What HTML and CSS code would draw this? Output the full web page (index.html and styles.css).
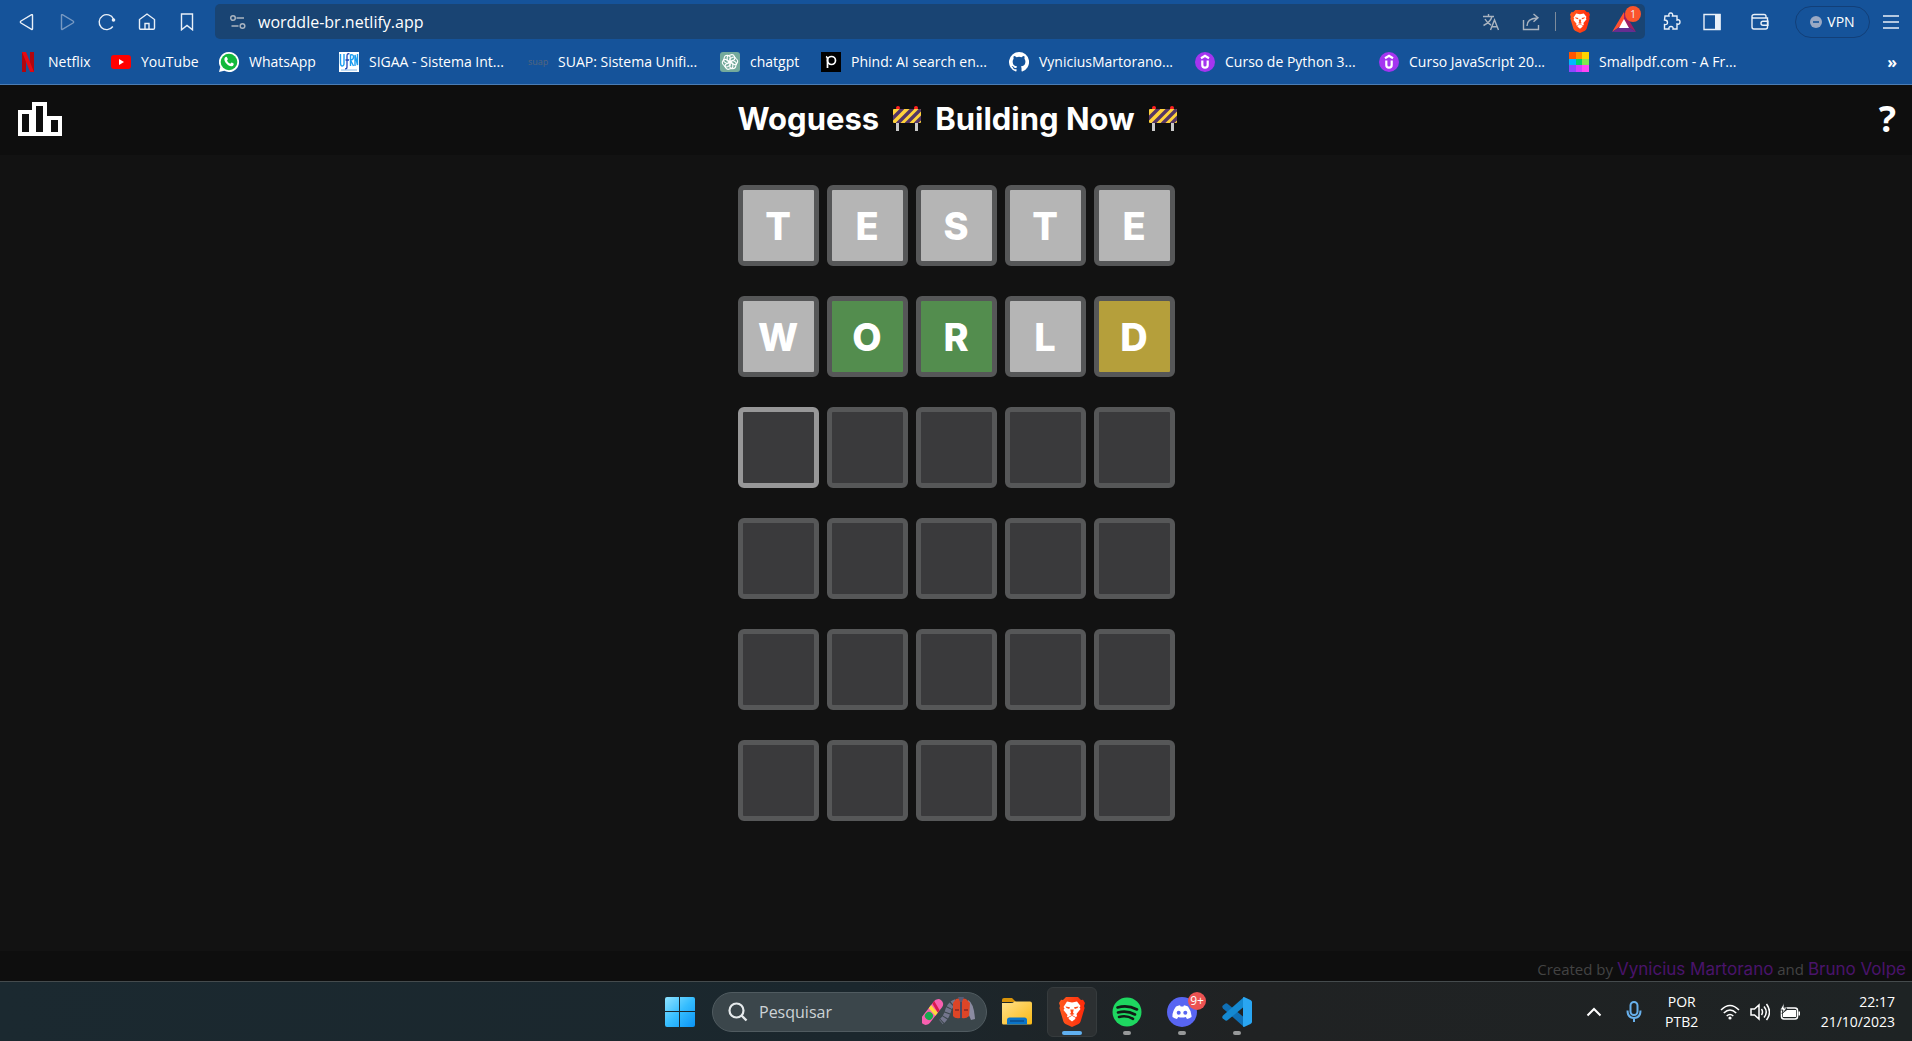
FILE: index.html
```html
<!DOCTYPE html>
<html lang="pt-BR">
<head>
<meta charset="utf-8">
<title>Woguess</title>
<link rel="stylesheet" href="styles.css">
</head>
<body>
<svg class="defs" aria-hidden="true">
  <defs>
    <linearGradient id="braveFill" x1="0" x2="1"><stop offset="0" stop-color="#ff5a1f"/><stop offset="1" stop-color="#ff2a0a"/></linearGradient>
    <linearGradient id="winFill" x1="0" y1="0" x2="1" y2="1"><stop offset="0" stop-color="#8fe3ff"/><stop offset=".5" stop-color="#35bdff"/><stop offset="1" stop-color="#0a93f5"/></linearGradient>
    <linearGradient id="folderFill" x1="0" y1="0" x2="1" y2="1"><stop offset="0" stop-color="#ffe08a"/><stop offset="1" stop-color="#f9b915"/></linearGradient>
    <clipPath id="boardClip"><rect x="0" y="3" width="28" height="14" rx="1"/></clipPath>
    <symbol id="brave" viewBox="0 0 26 30">
      <path d="M7 0h12l3 3 2-.3L26 6l-1 3 .6 2-4 13.500Q21 26 19.500 27L13 30l-6.500-3Q5 26 4.400 24.500L.4 11 1 9 0 6l2-3.300L4 3z" fill="url(#braveFill)"/>
      <path d="M8 4.500l5 1 5-1 3.500 4.500-1 1.500 1 1.500-4 5 .5 2-1 1.200-4-2.200-4 2.200L8 20l.5-2-4-5 1-1.500-1-1.500z" fill="#fff"/>
      <path d="M9.500 20.700l3.500-2 3.500 2-.3 1.300-3.200 2.500L9.800 22z" fill="#fff"/>
      <path d="M6.500 9.500l4.500.8-.8 1.800L7.500 11zM19.500 9.500l-4.500.8.8 1.800 2.700-1.100zM11.300 12.500h3.400L14 16l1.500 1-2.500 1-2.500-1 1.500-1z" fill="#ff4a18"/>
    </symbol>
    <symbol id="barrier" viewBox="0 0 28 26">
      <path d="M3 16h3v9H3zM22 16h3v9h-3z" fill="#c9c9c9"/>
      <circle cx="5" cy="2" r="2" fill="#f22"/><circle cx="23" cy="2" r="2" fill="#f22"/>
      <g clip-path="url(#boardClip)"><path d="M0 3h28v14H0z" fill="#ffd23b"/><path d="M-3 15L10 2M4 18L20 2M13 18L29 2M22 18l9-9" stroke="#533566" stroke-width="3.400"/></g>
    </symbol>
    <symbol id="udemy" viewBox="0 0 20 20"><circle cx="10" cy="10" r="10" fill="#a435f0"/><path d="M6 6.200l4-2.400 4 2.400M7.300 8.500v4.500q0 2.700 2.700 2.700t2.700-2.700V8.500" fill="none" stroke="#fff" stroke-width="2.200"/></symbol>
  </defs>
</svg>

<header class="browser">
  <div class="toolbar">
    <nav class="nav-buttons" aria-label="Navegação">
      <button class="tool" aria-label="Voltar"><svg width="18" height="18" viewBox="0 0 18 18"><path d="M14.500 2.200v13.600q0 1-.9.500L3 10q-1.300-1 0-2l10.600-6.300q.9-.4.9.5z"/></svg></button>
      <button class="tool dim" aria-label="Avançar"><svg width="18" height="18" viewBox="0 0 18 18"><path d="M3.500 2.200v13.600q0 1 .9.500L15 10q1.300-1 0-2L4.400 1.700q-.9-.4-.9.500z"/></svg></button>
      <button class="tool" aria-label="Recarregar"><svg width="18" height="18" viewBox="0 0 18 18"><path d="M14.800 13.500A7.500 7.500 0 1 1 15.500 6"/><circle cx="15.500" cy="7" r="1.800" fill="currentColor" stroke="none"/></svg></button>
      <button class="tool" aria-label="Início"><svg width="18" height="18" viewBox="0 0 18 18"><path d="M1.500 6.500L9 1l7.500 5.500V15q0 1.300-1.300 1.300H2.800Q1.500 16.300 1.500 15zM7 16V10.500h4V16"/></svg></button>
      <button class="tool" aria-label="Favorito"><svg width="18" height="18" viewBox="0 0 18 18"><path d="M3.500 1h11v15.800L9 12.500l-5.500 4.300z"/></svg></button>
    </nav>
    <div class="address">
      <svg class="tune" width="16" height="16" viewBox="0 0 16 16"><circle cx="3" cy="4" r="2.300"/><path d="M6.500 4H14M1.500 12h7"/><circle cx="12.500" cy="12" r="2.300"/></svg>
      <input class="url" aria-label="Endereço" value="worddle-br.netlify.app">
      <button class="tool muted" aria-label="Traduzir"><svg width="18" height="18" viewBox="0 0 18 18"><path d="M1 3.500h11M6.500 1v2.500M10 3.500Q8.500 9 1.500 12.500M3 6q2 4 6 6M8.500 17l4-10 4 10M10 13.800h5"/></svg></button>
      <button class="tool muted" aria-label="Compartilhar"><svg width="18" height="18" viewBox="0 0 18 18"><path d="M1.500 7v9.500h15V12M5 13q0-7.500 10-8M11.500 1L16 4.800l-4.500 4"/></svg></button>
      <span class="separator"></span>
      <button class="tool" aria-label="Brave Shields"><svg class="solid" width="20" height="23"><use href="#brave"/></svg></button>
      <button class="tool rewards" aria-label="Brave Rewards"><svg class="solid" width="24" height="20" viewBox="0 0 24 20"><path d="M12 0L0 20l12-8z" fill="#ff5030"/><path d="M12 0l12 20-12-8z" fill="#9e1f63"/><path d="M0 20h24l-12-8z" fill="#662d91"/><path d="M12 7l5 9H7z" fill="#fff"/></svg><span class="badge">1</span></button>
    </div>
    <div class="actions">
      <button class="tool" aria-label="Extensões"><svg width="20" height="20" viewBox="0 0 20 20"><path d="M3 4h4q-.8-3 1.700-3T10.500 4H15v4q3-.8 3 2t-3 2v5h-4q.5-2.500-2-2.500T7 17H2.500v-4.500q3 .5 3-2T2.500 8z"/></svg></button>
      <button class="tool" aria-label="Barra lateral"><svg width="18" height="18" viewBox="0 0 18 18"><path d="M1 1.500h16v15H1z"/><path d="M12 1h5.500v16H12z" fill="currentColor" stroke="none"/></svg></button>
      <button class="tool wide" aria-label="Carteira"><svg width="18" height="18" viewBox="0 0 18 18"><path d="M15 5V3.500Q15 1.500 13 1.500H3.500Q1 1.500 1 3.500V14q0 2 2 2h11.500q2 0 2-2V5H3Q1 5 1 3.500M17 8.200h-5q-2 0-2 2t2 2h5z"/></svg></button>
      <button class="vpn"><svg width="12" height="12" viewBox="0 0 12 12"><circle cx="6" cy="6" r="6" fill="#9aa9c4"/><path d="M3 6h6" stroke="#15539a" stroke-width="1.600"/></svg>VPN</button>
      <button class="tool" aria-label="Menu"><svg width="18" height="18" viewBox="0 0 18 18"><path d="M1 3h16M1 9h16M1 15h16"/></svg></button>
    </div>
  </div>
  <nav class="bookmarks" aria-label="Favoritos">
    <a href="#"><svg viewBox="0 0 20 20"><path d="M4 0h4v20l-4 .5zM12 0h4v20.500l-4-.5z" fill="#b1060f"/><path d="M4 0h4l8 20-4-.3z" fill="#e50914"/></svg>Netflix</a>
    <a href="#"><svg viewBox="0 0 20 20"><rect y="3" width="20" height="14" rx="3" fill="#f00"/><path d="M8 7l5 3-5 3z" fill="#fff"/></svg>YouTube</a>
    <a href="#"><svg viewBox="0 0 20 20"><path d="M10 0a10 10 0 1 1-4.700 18.800L0 20l1.300-5A10 10 0 0 1 10 0z" fill="#fff"/><circle cx="10" cy="10" r="8.300" fill="#12b93c"/><path d="M6 5.500q1.500-1.500 2.200.2l.6 1.400q.2.600-.8 1.600 1.300 2.400 3.300 3l1-1q.3-.4 2.300.8.500 2.300-2 2.700Q9 14 6.500 10.500 4.500 7.500 6 5.500z" fill="#fff"/></svg>WhatsApp</a>
    <a href="#"><svg viewBox="0 0 20 20"><path d="M0 0h20v20H0z" fill="#fff"/><path d="M1.500 2v9q0 3 1.800 3T5 11V2M11.500 14V3q3-1 3 2t-3 3l3 6M16 14V3l2.500 10V2" fill="none" stroke="#1b9df0" stroke-width="1.400"/><path d="M10.500 2Q8 1 8 4v11q0 2-2 2M6.500 8H10" fill="none" stroke="#1c45b8" stroke-width="1.300"/><path d="M2 18h16" stroke="#82b8e8"/></svg>SIGAA - Sistema Int...</a>
    <a href="#"><span class="suap">suap</span>SUAP: Sistema Unifi...</a>
    <a href="#"><svg viewBox="0 0 20 20"><rect width="20" height="20" rx="3" fill="#74aa9c"/><g fill="none" stroke="#fff" stroke-width="1.100"><path id="petal" d="M10 3.200q3-1.500 4.500 1.200.6 1.600 0 3.200L10 10.200 7.200 8.600V5.400Q7.500 3 10 3.200z"/><use href="#petal" transform="rotate(60 10 10)"/><use href="#petal" transform="rotate(120 10 10)"/><use href="#petal" transform="rotate(180 10 10)"/><use href="#petal" transform="rotate(240 10 10)"/><use href="#petal" transform="rotate(300 10 10)"/></g></svg>chatgpt</a>
    <a href="#"><svg viewBox="0 0 20 20"><path d="M0 0h20v20H0z" fill="#000"/><path d="M5 4.500q1.500.5 1.500 2.500v9" fill="none" stroke="#fff" stroke-width="1.700"/><circle cx="10.500" cy="8.500" r="4" fill="none" stroke="#fff" stroke-width="1.700"/></svg>Phind: AI search en...</a>
    <a href="#"><svg viewBox="0 0 16 16"><path fill="#fff" d="M8 0a8 8 0 0 0-2.530 15.590c.4.070.55-.17.550-.38v-1.490c-2.010.37-2.530-.49-2.690-.94-.09-.23-.48-.94-.82-1.130-.28-.15-.68-.52-.01-.53.630-.01 1.080.58 1.230.82.720 1.210 1.870.87 2.330.66.070-.52.280-.87.510-1.070-1.780-.2-3.640-.89-3.640-3.950 0-.87.310-1.590.82-2.150-.08-.2-.36-1.020.08-2.120 0 0 .67-.21 2.200.82a7.500 7.500 0 0 1 4 0c1.530-1.040 2.200-.82 2.200-.82.440 1.100.16 1.920.08 2.120.51.560.82 1.270.82 2.150 0 3.070-1.870 3.750-3.650 3.950.29.250.54.730.54 1.480v2.200c0 .21.150.46.550.38A8 8 0 0 0 8 0z"/></svg>VyniciusMartorano...</a>
    <a href="#"><svg><use href="#udemy"/></svg>Curso de Python 3...</a>
    <a href="#"><svg><use href="#udemy"/></svg>Curso JavaScript 20...</a>
    <a href="#"><svg viewBox="0 0 20 20" shape-rendering="crispEdges"><path d="M0 0h7v7H0z" fill="#ff5500"/><path d="M7 0h6v7H7z" fill="#ff9000"/><path d="M13 0h7v7h-7z" fill="#ffd400"/><path d="M0 7h7v6H0z" fill="#00b8ff"/><path d="M7 7h6v6H7z" fill="#00d26a"/><path d="M13 7h7v6h-7z" fill="#82e650"/><path d="M0 13h7v7H0z" fill="#8f46ff"/><path d="M7 13h6v7H7z" fill="#d23cff"/><path d="M13 13h7v7h-7z" fill="#ff46f5"/></svg>Smallpdf.com - A Fr...</a>
    <button class="more" aria-label="Mais favoritos">»</button>
  </nav>
</header>

<div class="page">
  <header class="game-header">
    <button class="stats" aria-label="Estatísticas"><svg width="44" height="34" viewBox="0 0 44 34"><path d="M2 10h13v22H2zM16 2h11v30H16zM30 16h12v16H30z" fill="none" stroke="#fff" stroke-width="4"/><path d="M11 8h6v26h-6zM26 14h7v20h-7z" fill="#fff"/></svg></button>
    <h1>Woguess <svg width="28" height="26"><use href="#barrier"/></svg> Building Now <svg width="28" height="26"><use href="#barrier"/></svg></h1>
    <button class="help" aria-label="Ajuda">?</button>
  </header>
  <main class="board">
    <div class="row">
      <input class="cell miss" aria-label="Linha 1, letra 1" value="T"><input class="cell miss" aria-label="Linha 1, letra 2" value="E"><input class="cell miss" aria-label="Linha 1, letra 3" value="S"><input class="cell miss" aria-label="Linha 1, letra 4" value="T"><input class="cell miss" aria-label="Linha 1, letra 5" value="E">
    </div>
    <div class="row">
      <input class="cell miss" aria-label="Linha 2, letra 1" value="W"><input class="cell hit" aria-label="Linha 2, letra 2" value="O"><input class="cell hit" aria-label="Linha 2, letra 3" value="R"><input class="cell miss" aria-label="Linha 2, letra 4" value="L"><input class="cell near" aria-label="Linha 2, letra 5" value="D">
    </div>
    <div class="row">
      <input class="cell current" aria-label="Linha 3, letra 1"><input class="cell" aria-label="Linha 3, letra 2"><input class="cell" aria-label="Linha 3, letra 3"><input class="cell" aria-label="Linha 3, letra 4"><input class="cell" aria-label="Linha 3, letra 5">
    </div>
    <div class="row">
      <input class="cell" aria-label="Linha 4, letra 1"><input class="cell" aria-label="Linha 4, letra 2"><input class="cell" aria-label="Linha 4, letra 3"><input class="cell" aria-label="Linha 4, letra 4"><input class="cell" aria-label="Linha 4, letra 5">
    </div>
    <div class="row">
      <input class="cell" aria-label="Linha 5, letra 1"><input class="cell" aria-label="Linha 5, letra 2"><input class="cell" aria-label="Linha 5, letra 3"><input class="cell" aria-label="Linha 5, letra 4"><input class="cell" aria-label="Linha 5, letra 5">
    </div>
    <div class="row">
      <input class="cell" aria-label="Linha 6, letra 1"><input class="cell" aria-label="Linha 6, letra 2"><input class="cell" aria-label="Linha 6, letra 3"><input class="cell" aria-label="Linha 6, letra 4"><input class="cell" aria-label="Linha 6, letra 5">
    </div>
  </main>
  <footer class="credits"><p>Created by <a href="#">Vynicius Martorano</a> and <a href="#">Bruno Volpe</a></p></footer>
</div>

<footer class="taskbar">
  <div class="apps">
    <button class="app start" aria-label="Iniciar"><svg width="30" height="30" viewBox="0 0 30 30"><path d="M2 0h12v14H0V2q0-2 2-2zM15 0h13q2 0 2 2v12H15zM0 15h14v15H2q-2 0-2-2zM15 15h15v13q0 2-2 2H15z" fill="url(#winFill)"/></svg></button>
    <label class="search">
      <svg width="20" height="20" viewBox="0 0 20 20"><circle cx="8.500" cy="8.500" r="7" fill="none" stroke="#e6eaec" stroke-width="2.200"/><path d="M13.500 13.500l5 5" stroke="#e6eaec" stroke-width="2.400"/></svg>
      <input aria-label="Pesquisar" placeholder="Pesquisar">
      <svg width="54" height="30" viewBox="0 0 54 30">
        <g transform="rotate(38 10 15)"><rect x="5" y="0" width="10" height="30" rx="5" fill="#f860b0"/><path d="M5 5l10 4v3L5 8z" fill="#d81b4c"/><path d="M5 10l10 2v4l-10-2z" fill="#ffd93c"/><circle cx="10" cy="20" r="4" fill="#18a84e"/></g>
        <path d="M34 5Q28 7 26 14t-7 11" fill="none" stroke="#73758c" stroke-width="6" stroke-dasharray="4 1"/>
        <path d="M46 3q6 3 7 19l-4 1-5-12z" fill="#8b8ba1"/>
        <path d="M34 2l5-1 5 1 4 4-1 13q-3 3-7 2l-1-2-1 2q-5 1-7-2L31 6z" fill="#dc4527"/><path d="M36 0h6l-3 7z" fill="#575a76"/><path d="M39 5v16" stroke="#464963" stroke-width="2"/><path d="M33 13h4M42 13h4" stroke="#9f2e24" stroke-width="2"/>
      </svg>
    </label>
    <button class="app" aria-label="Explorador de Arquivos"><svg width="30" height="27" viewBox="0 0 30 27"><path d="M0 2q0-2 2-2h8l4 4H0z" fill="#d9940a"/><path d="M0 5h9q2 0 3.500-1.500H28q2 0 2 2V25q0 1.500-1.500 1.500h-27Q0 26.500 0 25z" fill="url(#folderFill)"/><path d="M5 26.500V22q0-2.500 2.500-2.500h15Q25 19.500 25 22v4.500z" fill="#0a74c8"/><path d="M8 23h14" stroke="#0b4d8c" stroke-width="1.500"/></svg></button>
    <button class="app active" aria-label="Brave"><svg width="26" height="30"><use href="#brave"/></svg></button>
    <button class="app running" aria-label="Spotify"><svg width="30" height="30" viewBox="0 0 30 30"><circle cx="15" cy="15" r="14.500" fill="#1ed760"/><path d="M5.500 10.500q10-3 19.500 2M6 15.500q9-2.500 17 2M7 20q7.500-2 14 1.800" fill="none" stroke="#111b16" stroke-width="2.600" stroke-linecap="round"/></svg></button>
    <button class="app running" aria-label="Discord"><svg width="30" height="30" viewBox="0 0 30 30"><circle cx="15" cy="15" r="15" fill="#5865f2"/><path d="M9 9.500q2-1 4-1.300l.7 1.200h2.600l.7-1.200q2 .3 4 1.300 4 5.500 3.500 10.500-2 1.500-4.500 2l-1.200-2q-3.800 1.200-7.600 0l-1.200 2q-2.500-.5-4.500-2Q5 15 9 9.500z" fill="#fff"/><circle cx="11.700" cy="15.700" r="2" fill="#5865f2"/><circle cx="18.300" cy="15.700" r="2" fill="#5865f2"/></svg><span class="count">9+</span></button>
    <button class="app running" aria-label="Visual Studio Code"><svg width="30" height="30" viewBox="0 0 30 30"><path d="M.8 8.500l2.700-2q1-.6 2 .2L24 22l-2 8L1 11.500q-1.400-1.600-.2-3z" fill="#0f6fb5"/><path d="M.8 21.500l2.700 2q1 .6 2-.2L24 8l-2-8L1 18.500q-1.400 1.600-.2 3z" fill="#1489d2"/><path d="M22 0l6.500 3Q30 4 30 5v20q0 1-1.500 2L22 30q-1 0-1-1V1q0-1 1-1z" fill="#2aa6f2"/></svg></button>
  </div>
  <div class="tray">
    <button aria-label="Ícones ocultos"><svg width="16" height="10" viewBox="0 0 16 10"><path d="M1.500 8.500L8 2l6.500 6.500" stroke-width="2"/></svg></button>
    <button class="mic" aria-label="Microfone"><svg width="16" height="22" viewBox="0 0 16 22"><rect x="4.500" y="1" width="7" height="13" rx="3.500"/><path d="M1.500 9.500q0 7.500 6.500 7.500t6.500-7.500M8 17v4"/></svg></button>
    <button class="lang">POR<br>PTB2</button>
    <button class="status" aria-label="Rede, som e bateria">
      <svg width="20" height="16" viewBox="0 0 20 16"><path d="M1 6q9-9 18 0M3.800 9q6.200-6 12.400 0M6.700 12q3.300-3 6.600 0"/><circle cx="10" cy="14" r="1.600" fill="#fff" stroke="none"/></svg>
      <svg width="20" height="18" viewBox="0 0 20 18"><path d="M1 6h3.500L9 2v14l-4.500-4H1zM11.500 6q2 3 0 6M14 3.500q4.500 5.500 0 11M16.500 1q6 8 0 16"/></svg>
      <svg width="20" height="18" viewBox="0 0 20 18"><rect x="1.500" y="5" width="16" height="11" rx="2.500"/><path d="M7 7h9v7H3v-4zM18.500 8.500h1.500v4h-1.500z" fill="#fff" stroke="none"/><path d="M4 0L0 7h3L2 11l5-6H4z" fill="#fff" stroke="#1e2426" stroke-width=".8"/></svg>
    </button>
    <button class="clock">22:17<br>21/10/2023</button>
  </div>
</footer>
</body>
</html>
```
FILE: styles.css
```css
* { box-sizing: border-box; }
html, body { height: 100%; }
body {
  margin: 0;
  display: flex;
  flex-direction: column;
  background: #121212;
  color: #fff;
  font: 14px/20px "Open Sans", "Noto Sans", sans-serif;
}
button, input { font: inherit; color: inherit; border: 0; padding: 0; background: none; outline: 0; }
button { display: flex; align-items: center; justify-content: center; flex: none; }
svg { flex: none; }
a { color: inherit; text-decoration: none; }
.defs { position: absolute; width: 0; height: 0; }

/* Browser bars */
.browser { background: #15539a; border-bottom: 1px solid #4b7db5; }
.toolbar { display: flex; align-items: center; height: 43px; padding-left: 7px; }
.nav-buttons, .actions { display: flex; align-items: center; }
.tool { position: relative; width: 40px; height: 34px; color: #e9f0f8; }
.tool svg:not(.solid) { fill: none; stroke: currentColor; stroke-width: 1.4; }
.tool.wide { width: 56px; }
.dim { color: #7799c2; }
.muted { color: #aab4c0; }
.address {
  flex: 1;
  display: flex;
  align-items: center;
  height: 35px;
  margin-left: 8px;
  padding: 0 1px 0 15px;
  border-radius: 5px;
  background: #194473;
}
.tune { fill: none; stroke: #aab4c0; stroke-width: 1.5; }
.url { flex: 1; min-width: 0; margin-left: 12px; font-size: 16px; }
.separator { width: 1px; height: 19px; margin: 0 4px; background: #7d8b9b; }
.rewards { margin-left: 4px; }
.badge {
  position: absolute;
  top: 1px;
  right: 3px;
  width: 16px;
  height: 16px;
  border-radius: 8px;
  background: #fb542b;
  font-size: 10px;
  line-height: 16px;
  text-align: center;
}
.actions { padding-left: 7px; }
.vpn { width: 75px; height: 32px; gap: 5px; margin-left: 7px; border: 1px solid #123f78; border-radius: 16px; }
.actions .vpn + .tool { width: 42px; }

.bookmarks {
  display: grid;
  grid-template-columns: 93px 108px 120px 189px 192px 101px 188px 186px 184px 190px 1fr auto;
  align-items: center;
  height: 41px;
  padding: 0 15px 3px 18px;
}
.bookmarks a { display: flex; align-items: center; gap: 10px; white-space: nowrap; }
.bookmarks svg { width: 20px; height: 20px; }
.suap { width: 20px; color: #56667c; font-size: 9px; line-height: 16px; }
.more { font-size: 16px; font-weight: 700; }

/* Game */
.page {
  flex: 1;
  display: flex;
  flex-direction: column;
  font-family: Inter, sans-serif;
}
.game-header {
  display: grid;
  grid-template-columns: 1fr auto 1fr;
  align-items: center;
  height: 70px;
  padding: 0 16px 2px 18px;
  background: #0e0e0e;
}
.stats { justify-self: start; }
h1 { display: flex; align-items: center; gap: 14px; margin: 0; font-size: 31px; line-height: 40px; }
.help { justify-self: end; font: 700 36px/40px "Noto Sans", sans-serif; }
.board { flex: 1; display: flex; flex-direction: column; align-items: center; gap: 30px; padding: 30px 0; }
.row { display: flex; gap: 8px; }
.cell {
  width: 81px;
  height: 81px;
  border: 5px solid #565758;
  border-radius: 6px;
  background: #3a3a3c;
  font-size: 38px;
  font-weight: 800;
  text-align: center;
}
.miss { background: #b5b5b5; }
.hit { background: #538d4e; }
.near { background: #b59f3b; }
.current { border-color: #979798; }
.credits { height: 30px; padding: 7px 6px 0; background: #0e0e0e; color: #434343; text-align: right; }
.credits p { margin: 0; font: 15px/22px "Open Sans", sans-serif; }
.credits a { color: #4a146b; font-family: Inter, sans-serif; font-size: 17px; }

/* Taskbar */
.taskbar {
  display: grid;
  grid-template-columns: 1fr auto 1fr;
  align-items: center;
  height: 60px;
  padding: 0 17px 0 22px;
  border-top: 1px solid #454b4d;
  background: linear-gradient(90deg, #1b2930, #1b272d 45%, #202223 65%, #1e2324);
}
.apps { grid-column: 2; display: flex; align-items: center; gap: 5px; }
.app { position: relative; width: 50px; height: 50px; border: 1px solid transparent; border-radius: 6px; }
.app::after { content: ""; position: absolute; bottom: 1px; left: 50%; height: 4px; border-radius: 2px; transform: translateX(-50%); }
.running::after { width: 8px; background: #969899; }
.active { border-color: #363b3d; background: #2c3032; }
.active::after { width: 20px; background: #60b0f0; }
.search {
  display: flex;
  align-items: center;
  width: 275px;
  height: 40px;
  margin-left: 2px;
  padding: 0 10px 0 15px;
  border: 1px solid #505b60;
  border-radius: 20px;
  background: #3b464b;
}
.search input { flex: 1; min-width: 0; margin-left: 11px; font-size: 16px; }
.search input::placeholder { color: #cdd3d6; opacity: 1; }
.count {
  position: absolute;
  top: 4px;
  right: 0;
  width: 18px;
  height: 18px;
  border-radius: 9px;
  background: #ec5252;
  font-size: 12px;
  line-height: 18px;
  text-align: center;
}
.tray { grid-column: 3; justify-self: end; display: flex; align-items: center; }
.tray svg { fill: none; stroke: #fff; stroke-width: 1.5; }
.tray .mic { margin: 0 17px 0 24px; }
.mic svg { stroke: #68b0ec; stroke-width: 2; }
.lang { width: 46px; text-align: center; }
.status { gap: 10px; margin: 0 21px 0 15px; }
.clock { text-align: right; }
```
